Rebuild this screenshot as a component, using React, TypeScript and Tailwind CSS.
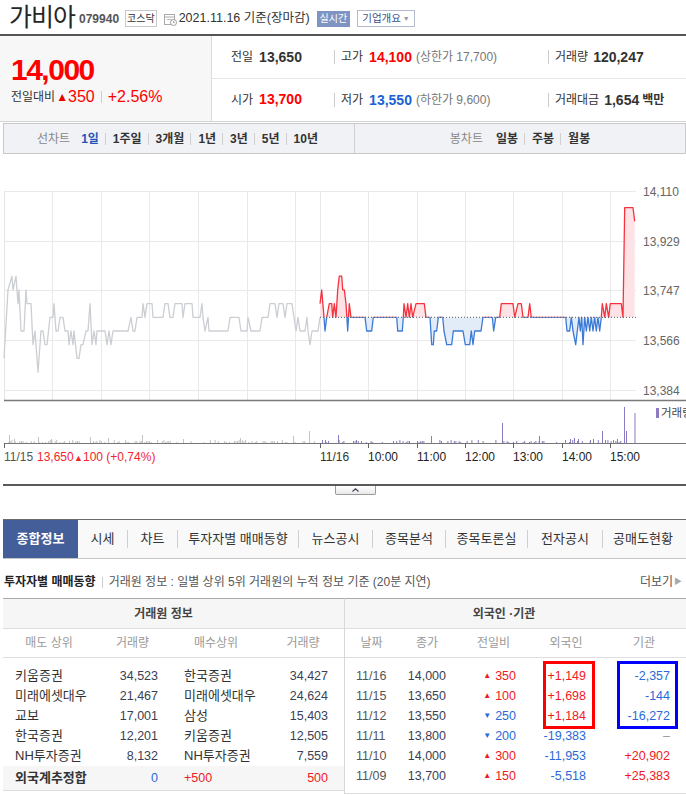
import React from "react";

// price chart geometry (page coords): prev close 13,650 sits on BASE, one tick (50원) = STEP px
const BASE = 317.3;
const STEP = 13.7;
const ly = (l: number) => BASE - l * STEP;

// 11/15 intraday, [x, ticks from 13,650]
const prevDay: [number, number][] = [
  [4, -3], [8, 2], [12, 3], [13, 2], [16, 3], [18, 1], [19, 2], [21, -1], [24, -1], [26, 2], [27, 1], [31, 1],
  [33, -2], [35, -1], [38, -4], [41, -1], [43, -1], [45, -2], [47, -2], [50, 0], [53, 0], [54, 1], [56, -1],
  [58, -1], [60, 0], [63, 0], [65, -1], [68, -1], [69, -2], [71, -1], [73, -2], [74, -1], [77, -3], [79, -3],
  [81, -2], [83, -2], [86, -1], [88, -1], [90, 1], [92, -2], [94, -1], [96, -2], [97, -1], [105, -1], [107, -2],
  [109, -1], [111, -2], [113, -1], [128, -1], [131, 0], [133, -1], [135, -1], [137, 0], [142, 0], [143, 1],
  [145, 0], [147, 1], [152, 1], [153, 0], [163, 0], [165, 1], [168, 1], [170, 0], [173, 0], [175, 1], [182, 1],
  [183, 0], [185, 1], [192, 1], [193, 0], [200, 0], [202, 1], [203, 0], [205, -1], [208, 0], [209, -1],
  [228, -1], [230, 0], [239, 0], [241, -1], [247, -1], [248, 0], [251, -1], [260, -1], [262, 0], [268, 0],
  [270, 1], [275, 1], [277, 0], [279, 1], [283, 1], [285, 0], [287, 1], [292, 1], [294, 0], [296, -1],
  [298, 0], [300, -1], [305, -1], [307, 0], [308, -1], [310, -2], [312, -1], [318, -1], [320, 0],
];

// 11/16 intraday
const today: [number, number][] = [
  [320, 1], [321.7, 2], [324, 0], [325, -1], [326.7, 0], [329.3, 1], [331.7, 1], [332.7, 0], [334.3, 1],
  [336, 0], [337.7, 2], [339.3, 3], [341.7, 3], [342.7, 2], [344.3, 2], [346, 1], [347.7, -1], [349.3, 1],
  [351, 0], [365, 0], [366.7, -1], [371.7, -1], [373.3, 0], [396.7, 0], [397.7, -1], [402.3, -1], [403.3, 0],
  [404, 1], [406, 0], [407.7, 1], [409.3, 0], [411, 1], [412.7, 0], [416, 1], [424.3, 1], [426, 0], [430, 0],
  [431.7, -2], [433.3, -2], [434.3, -1], [436.7, -1], [438.3, 0], [442.7, 0], [444, -1], [446.7, -2],
  [451.7, -2], [453.3, -1], [463, -1], [465.3, -2], [469.7, -2], [471.3, -1], [473, -2], [474.7, -1],
  [477.3, -1], [481, -1], [483, 0], [492.3, 0], [493.7, -1], [495.7, 0], [499.7, 0], [501.3, 1], [513, 1],
  [514.7, 0], [518, 1], [521.3, 1], [523, 0], [528, 0], [529.7, 1], [531.3, 0], [565.7, 0], [567, -1],
  [569.7, -1], [571.3, 0], [573, -1], [575.7, -2], [577.3, -1], [579, 0], [580.3, -1], [581.7, 0], [583, -2],
  [584.7, 0], [586.3, -1], [588, 0], [589.7, -1], [591.3, 0], [593, -1], [594.7, 0], [596.3, -1], [598, 0],
  [599.7, -1], [601.3, 0], [602.3, 1], [604.7, 0], [606.3, 1], [608.7, 0], [610.3, 1], [621.3, 1], [623, 0],
  [624.7, 8], [633, 8], [634.7, 7],
];

const pts = (a: [number, number][]) => a.map(([x, l]) => `${x},${ly(l).toFixed(1)}`).join(" ");

function seeded(seed: number) {
  let s = seed;
  return () => {
    s = (s * 9301 + 49297) % 233280;
    return s / 233280;
  };
}

// volume bars, baseline at y 443
function makeBars() {
  const r = seeded(7);
  const gray: [number, number][] = [];
  const purple: [number, number][] = [];
  for (let x = 5; x < 319; x += 1.6) {
    const v = r();
    if (v < 0.45) gray.push([x, 1 + Math.round(r() * 2)]);
  }
  for (let x = 321; x < 623; x += 1.6) {
    const v = r();
    if (v < 0.3) purple.push([x, 1 + Math.round(r() * 2)]);
  }
  const bigGray: [number, number][] = [
    [9, 8], [14, 4], [38, 6], [51, 4], [90, 6], [108, 5], [142, 8], [183, 4], [240, 5], [293, 7], [309, 12],
  ];
  const bigPurple: [number, number][] = [
    [322, 3], [325, 3], [328, 2], [338, 8], [356, 3], [431, 7], [502, 20], [539, 7], [565, 3], [570, 4], [574, 5],
    [578, 4], [590, 3], [593, 4], [602, 12], [605, 3], [613, 3], [617, 4], [624, 36], [626, 12], [634.5, 30],
  ];
  return { gray: [...gray, ...bigGray], purple: [...purple, ...bigPurple] };
}

const bars = makeBars();

function PriceChart() {
  const gridY = [191, 241, 290, 340, 390];
  const gridX = [52, 101, 149, 198, 247, 295, 320, 368, 417, 465, 513, 562, 610];
  const yLabels = ["14,110", "13,929", "13,747", "13,566", "13,384"];
  const times: [number, string][] = [
    [368, "10:00"], [417, "11:00"], [465, "12:00"], [513, "13:00"], [562, "14:00"], [610, "15:00"],
  ];
  const first = today[0][0];
  const last = today[today.length - 1][0];
  const area = `${first},${BASE} ${pts(today)} ${last},${BASE}`;

  return (
    <svg width={686} height={316} viewBox="0 154 686 316" className="block">
      <defs>
        <clipPath id="up">
          <rect x="0" y="154" width="686" height={BASE - 154} />
        </clipPath>
        <clipPath id="dn">
          <rect x="0" y={BASE} width="686" height={470 - BASE} />
        </clipPath>
      </defs>

      {gridY.map((y) => (
        <line key={y} x1={4} x2={636} y1={y + 0.5} y2={y + 0.5} stroke="#e9e9e9" />
      ))}
      {gridX.map((x) => (
        <line key={x} x1={x + 0.5} x2={x + 0.5} y1={191} y2={400} stroke="#e9e9e9" />
      ))}
      <line x1={4.5} x2={4.5} y1={191} y2={400} stroke="#e4e4e4" />

      {/* 11/15 line */}
      <polyline points={pts(prevDay)} fill="none" stroke="#cbced3" strokeWidth={1.3} strokeLinejoin="round" />

      {/* 11/16 area + line */}
      <polygon points={area} fill="#fde3e6" clipPath="url(#up)" />
      <polygon points={area} fill="#e2ebf8" clipPath="url(#dn)" />
      <polyline points={pts(today)} fill="none" stroke="#f5333f" strokeWidth={1.3} strokeLinejoin="round" clipPath="url(#up)" />
      <polyline points={pts(today)} fill="none" stroke="#3b7ad6" strokeWidth={1.3} strokeLinejoin="round" clipPath="url(#dn)" />
      <line x1={320} x2={636} y1={BASE} y2={BASE} stroke="#555" strokeWidth={1} strokeDasharray="1 2" />

      {gridY.map((y, i) => (
        <text key={y} x={643} y={y + 4.5} fontSize={12} fill="#666" fontFamily="Liberation Sans, sans-serif">
          {yLabels[i]}
        </text>
      ))}

      <line x1={4} x2={686} y1={400.5} y2={400.5} stroke="#7a7a7a" strokeWidth={1.5} />

      {/* volume */}
      {bars.gray.map(([x, h], i) => (
        <rect key={"g" + i} x={x} y={443 - h} width={1} height={h} fill="#c3c3c3" />
      ))}
      {bars.purple.map(([x, h], i) => (
        <rect key={"p" + i} x={x} y={443 - h} width={1} height={h} fill="#8c7bc0" />
      ))}
      <rect x={656} y={408} width={3} height={10} fill="#8c7bc0" />
      <text x={661} y={417} fontSize={11.5} fill="#444" fontFamily="Noto Sans CJK KR, sans-serif">
        거래량
      </text>

      <line x1={4} x2={686} y1={443.5} y2={443.5} stroke="#777" strokeWidth={1.2} />
      {[4, 320, ...times.map((t) => t[0])].map((x) => (
        <line key={"t" + x} x1={x + 0.5} x2={x + 0.5} y1={443} y2={448} stroke="#666" />
      ))}

      <text y={461} fontSize={12} fontFamily="Liberation Sans, sans-serif">
        <tspan x={4} fill="#555">11/15</tspan>
        <tspan x={37} fill="#f0262f">13,650</tspan>
        <tspan x={74} fill="#f0262f" fontSize={9}>▲</tspan>
        <tspan x={83} fill="#f0262f">100 (+0,74%)</tspan>
      </text>
      <text x={320} y={461} fontSize={12} fill="#333" fontFamily="Liberation Sans, sans-serif">
        11/16
      </text>
      {times.map(([x, t]) => (
        <text key={t} x={x} y={461} fontSize={12} fill="#222" fontFamily="Liberation Sans, sans-serif">
          {t}
        </text>
      ))}
    </svg>
  );
}

function Header() {
  return (
    <div className="flex h-[34px] items-center pl-[9px]">
      <span className="text-[25px] leading-none tracking-[-1px] text-[#262626]">가비아</span>
      <span className="ml-[4px] mt-[4px] text-[12px] font-bold text-[#555]">079940</span>
      <span className="ml-[6px] mt-[3px] border border-[#c8c8c8] px-[1px] text-[10px] leading-[15px] text-[#333]">
        코스닥
      </span>
      <svg width="13" height="13" viewBox="0 0 13 13" className="ml-[7px] mt-[4px]">
        <rect x="0.5" y="1.5" width="10" height="10" fill="#fff" stroke="#aaa" />
        <line x1="1" y1="4" x2="10" y2="4" stroke="#aaa" />
        <line x1="3" y1="6.5" x2="8" y2="6.5" stroke="#bbb" />
        <circle cx="9.5" cy="9.5" r="3" fill="#fff" stroke="#999" />
        <path d="M9.5 8v1.6h1.2" stroke="#999" fill="none" strokeWidth="0.9" />
      </svg>
      <span className="ml-[2px] mt-[3px] text-[12.5px] text-[#333]">2021.11.16 기준(장마감)</span>
      <span className="ml-[7px] mt-[3px] bg-[#8094c3] px-[3px] text-[10px] leading-[16px] text-white">실시간</span>
      <span className="ml-[7px] mt-[3px] flex items-center border border-[#b3bccf] px-[4px] text-[10.5px] leading-[15px] text-[#3d4f87]">
        기업개요
        <span className="ml-[2px] text-[7px] text-[#99a]">▼</span>
      </span>
    </div>
  );
}

function PriceBox() {
  return (
    <div className="flex border-t-[2px] border-b border-t-[#555] border-b-[#d4d4d4]">
      <div className="h-[85px] w-[212px] border-r border-[#dcdcdc] bg-[#f7f7f7] pl-[11px] pt-[19px]">
        <div className="text-[30px] font-bold leading-[30px] tracking-[-1.5px] text-[#f00]">14,000</div>
        <div className="mt-[3px] flex h-[18px] items-center">
          <span className="text-[12px] text-[#333]">전일대비</span>
          <span className="ml-[1px] text-[12px] text-[#e00]">▲</span>
          <span className="text-[16px] text-[#f00]">350</span>
          <span className="mx-[6px] h-[12px] w-px bg-[#ccc]" />
          <span className="text-[16px] text-[#f00]">+2.56%</span>
        </div>
      </div>
      <div className="flex-1">
        <div className="flex h-[43px] items-center border-b border-[#e6e6e6] text-[14px]">
          <div className="flex w-[122px] items-center pl-[19px]">
            <span className="text-[12px] text-[#333]">전일</span>
            <span className="ml-[6px] font-bold text-[#333]">13,650</span>
          </div>
          <div className="flex w-[214px] items-center border-l border-[#ccc] pl-[6px] leading-[14px]">
            <span className="text-[12px] text-[#333]">고가</span>
            <span className="ml-[6px] font-bold text-[#f00]">14,100</span>
            <span className="ml-[4px] text-[12px] text-[#777]">(상한가 17,700)</span>
          </div>
          <div className="flex items-center border-l border-[#ccc] pl-[6px] leading-[14px]">
            <span className="text-[12px] text-[#333]">거래량</span>
            <span className="ml-[5px] font-bold text-[#333]">120,247</span>
          </div>
        </div>
        <div className="flex h-[41px] items-center text-[14px]">
          <div className="flex w-[122px] items-center pl-[19px]">
            <span className="text-[12px] text-[#333]">시가</span>
            <span className="ml-[6px] font-bold text-[#f00]">13,700</span>
          </div>
          <div className="flex w-[214px] items-center border-l border-[#ccc] pl-[6px] leading-[14px]">
            <span className="text-[12px] text-[#333]">저가</span>
            <span className="ml-[6px] font-bold text-[#1a62d6]">13,550</span>
            <span className="ml-[4px] text-[12px] text-[#777]">(하한가 9,600)</span>
          </div>
          <div className="flex items-center border-l border-[#ccc] pl-[6px] leading-[14px]">
            <span className="text-[12px] text-[#333]">거래대금</span>
            <span className="ml-[5px] font-bold text-[#333]">1,654</span>
            <span className="ml-[3px] text-[12px] font-bold text-[#333]">백만</span>
          </div>
        </div>
      </div>
    </div>
  );
}

function Sep() {
  return <span className="ml-[6px] mr-[7px] h-[12px] w-px bg-[#d0d0d0]" />;
}

function ChartTabs() {
  const left = ["1주일", "3개월", "1년", "3년", "5년", "10년"];
  return (
    <div className="ml-[3px] mt-[1px] flex h-[31px] border border-[#c9c9c9] bg-[#f1f2f6] text-[12px]">
      <div className="flex w-[351px] items-center border-r border-[#d0d0d0] pl-[33px]">
        <span className="text-[#888]">선차트</span>
        <span className="ml-[11px] font-bold text-[#2453b8]">1일</span>
        {left.map((t) => (
          <React.Fragment key={t}>
            <Sep />
            <span className="font-bold text-[#333]">{t}</span>
          </React.Fragment>
        ))}
      </div>
      <div className="flex flex-1 items-center justify-center">
        <span className="text-[#888]">봉차트</span>
        <span className="ml-[13px] font-bold text-[#333]">일봉</span>
        <Sep />
        <span className="font-bold text-[#333]">주봉</span>
        <Sep />
        <span className="font-bold text-[#333]">월봉</span>
      </div>
    </div>
  );
}

function Collapse() {
  return (
    <div className="ml-[3px] mt-[14px]">
      <div className="h-[2px] bg-[#5a5a5a]" />
      <div className="ml-[332px] flex h-[9px] w-[41px] items-center justify-center rounded-b-[2px] border border-t-0 border-[#9a9a9a] bg-[linear-gradient(#ffffff,#e9e9e9)]">
        <svg width="7" height="4" viewBox="0 0 7 4">
          <path d="M0.5 3.5 L3.5 0.8 L6.5 3.5" fill="none" stroke="#445" strokeWidth="1.2" />
        </svg>
      </div>
    </div>
  );
}

function MainTabs() {
  const tabs: [string, number][] = [
    ["시세", 50], ["차트", 50], ["투자자별 매매동향", 121], ["뉴스공시", 74], ["종목분석", 73],
    ["종목토론실", 82], ["전자공시", 75], ["공매도현황", 80],
  ];
  return (
    <div className="ml-[3px] mt-[24px] flex h-[40px] border-t border-b border-t-[#6a6a6a] border-b-[#c4c4c4] bg-[#f9f9f9]">
      <div className="flex w-[75px] items-center justify-center bg-[#445e9a] text-[13px] font-bold text-white">
        종합정보
      </div>
      {tabs.map(([t, w], i) => (
        <div key={t} className="flex items-center" style={{ width: w }}>
          <span className="flex-1 text-center text-[13px] text-[#333]">{t}</span>
          {i < tabs.length - 1 && <span className="h-[18px] w-px bg-[#cfcfcf]" />}
        </div>
      ))}
    </div>
  );
}

const sellers: [string, string, string, string][] = [
  ["키움증권", "34,523", "한국증권", "34,427"],
  ["미래에셋대우", "21,467", "미래에셋대우", "24,624"],
  ["교보", "17,001", "삼성", "15,403"],
  ["한국증권", "12,201", "키움증권", "12,505"],
  ["NH투자증권", "8,132", "NH투자증권", "7,559"],
];

type Flow = { d: string; close: string; up: boolean; chg: string; fr: string; inst: string };
const flows: Flow[] = [
  { d: "11/16", close: "14,000", up: true, chg: "350", fr: "+1,149", inst: "-2,357" },
  { d: "11/15", close: "13,650", up: true, chg: "100", fr: "+1,698", inst: "-144" },
  { d: "11/12", close: "13,550", up: false, chg: "250", fr: "+1,184", inst: "-16,272" },
  { d: "11/11", close: "13,800", up: false, chg: "200", fr: "-19,383", inst: "–" },
  { d: "11/10", close: "14,000", up: true, chg: "300", fr: "-11,953", inst: "+20,902" },
  { d: "11/09", close: "13,700", up: true, chg: "150", fr: "-5,518", inst: "+25,383" },
];

const tone = (v: string) =>
  v.startsWith("+") ? "text-[#f01a24]" : v.startsWith("-") ? "text-[#2a6ad8]" : "text-[#999]";

function Investor() {
  const leftCols = "grid grid-cols-[92px_75px_92px_82px]";
  const rightCols = "grid grid-cols-[53px_58px_75px_70px_86px]";
  return (
    <div className="ml-[3px]">
      <div className="mt-[13px] flex h-[20px] items-center text-[12px]">
        <span className="pl-[1px] font-bold text-[#222]">투자자별 매매동향</span>
        <span className="mx-[6px] h-[11px] w-px bg-[#ccc]" />
        <span className="text-[#555]">거래원 정보 : 일별 상위 5위 거래원의 누적 정보 기준 (20분 지연)</span>
        <span className="ml-auto mr-[4px] flex items-center text-[#555]">
          더보기<span className="ml-[1px] text-[8px] text-[#aaa]">▶</span>
        </span>
      </div>

      <div className="mt-[6px] flex">
        {/* 거래원 정보 */}
        <div className="w-[341px] border-t border-[#ababab]">
          <div className="flex h-[30px] items-center justify-center border-b border-[#dedede] bg-[#f6f6f6] pr-[20px] text-[12px] font-bold text-[#444]">
            거래원 정보
          </div>
          <div className={`${leftCols} h-[29px] items-center border-b border-[#dedede] text-center text-[12px] text-[#999]`}>
            <span>매도 상위</span>
            <span>거래량</span>
            <span>매수상위</span>
            <span>거래량</span>
          </div>
          <div className="pt-[8px]">
            {sellers.map(([a, b, c, d]) => (
              <div key={a + c} className={`${leftCols} h-[20px] items-center text-[13px]`}>
                <span className="pl-[12px] text-[#333]">{a}</span>
                <span className="pr-[12px] text-right text-[12.5px] text-[#3a3f55]">{b}</span>
                <span className="pl-[14px] text-[#333]">{c}</span>
                <span className="pr-[16px] text-right text-[12.5px] text-[#3a3f55]">{d}</span>
              </div>
            ))}
            <div className={`${leftCols} h-[25px] items-center border-b border-[#dedede] bg-[#f6f6f6] text-[13px]`}>
              <span className="pl-[12px] font-bold text-[#333]">외국계추정합</span>
              <span className="pr-[12px] text-right text-[12.5px] text-[#2a6ad8]">0</span>
              <span className="pl-[14px] text-[12.5px] text-[#f01a24]">+500</span>
              <span className="pr-[16px] text-right text-[12.5px] text-[#f01a24]">500</span>
            </div>
          </div>
        </div>

        {/* 외국인·기관 */}
        <div className="relative flex-1 border-t border-l border-t-[#ababab] border-l-[#d8d8d8]">
          <div className="flex h-[30px] items-center justify-center border-b border-[#dedede] bg-[#f6f6f6] pr-[24px] text-[12px] font-bold text-[#444]">
            외국인 ·기관
          </div>
          <div className={`${rightCols} h-[29px] items-center border-b border-[#dedede] text-center text-[12px] text-[#999]`}>
            <span>날짜</span>
            <span>종가</span>
            <span>전일비</span>
            <span>외국인</span>
            <span>기관</span>
          </div>
          <div className="border-b border-[#dedede] pb-[7px] pt-[8px]">
            {flows.map((f) => (
              <div key={f.d} className={`${rightCols} h-[20px] items-center text-[12.5px]`}>
                <span className="pl-[11px] text-[#555]">{f.d}</span>
                <span className="pr-[10px] text-right text-[#3a3f55]">{f.close}</span>
                <span className={`flex items-center justify-end pr-[15px] ${f.up ? "text-[#f01a24]" : "text-[#2a6ad8]"}`}>
                  <span className="mr-[4px] text-[8px]">{f.up ? "▲" : "▼"}</span>
                  {f.chg}
                </span>
                <span className={`pr-[15px] text-right ${tone(f.fr)}`}>{f.fr}</span>
                <span className={`pr-[17px] text-right ${tone(f.inst)}`}>{f.inst}</span>
              </div>
            ))}
          </div>
          {/* highlight boxes */}
          <div className="absolute left-[198px] top-[62px] h-[68px] w-[52px] border-[3px] border-[#f00]" />
          <div className="absolute left-[272px] top-[62px] h-[68px] w-[61px] border-[3px] border-[#00f]" />
        </div>
      </div>
    </div>
  );
}

export default function App() {
  return (
    <div className="h-[795px] w-[686px] overflow-hidden bg-white font-['Liberation_Sans','Noto_Sans_CJK_KR',sans-serif] text-[#333]">
      <Header />
      <PriceBox />
      <ChartTabs />
      <PriceChart />
      <Collapse />
      <MainTabs />
      <Investor />
    </div>
  );
}
